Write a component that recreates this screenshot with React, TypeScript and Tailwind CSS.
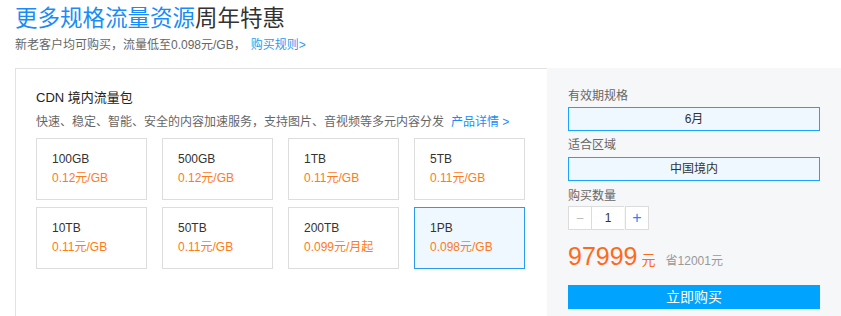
const font = 'font-["Liberation_Sans","Noto_Sans_CJK_SC",sans-serif]'

const packs = [
  { size: '100GB', price: '0.12元/GB' },
  { size: '500GB', price: '0.12元/GB' },
  { size: '1TB', price: '0.11元/GB' },
  { size: '5TB', price: '0.11元/GB' },
  { size: '10TB', price: '0.11元/GB' },
  { size: '50TB', price: '0.11元/GB' },
  { size: '200TB', price: '0.099元/月起' },
  { size: '1PB', price: '0.098元/GB', active: true },
]

export default function App() {
  return (
    <div className={`w-[841px] h-[316px] overflow-hidden bg-white ${font}`}>
      {/* 헤더 */}
      <div className="pl-[15px] pt-[4px]">
        <h1 className="text-[22.5px] leading-[30px] text-[#333]">
          <span className="text-[#1a8cf7]">更多规格流量资源</span>周年特惠
        </h1>
        <p className="text-[12px] leading-[18px] mt-[2px] text-[#666]">
          新老客户均可购买，流量低至0.098元/GB，
          <a className="ml-[5px] text-[#2a9bef]">购买规则&gt;</a>
        </p>
      </div>

      <div className="flex ml-[15px] mt-[14px] h-[260px]">
        {/* 左侧 */}
        <div className="w-[532px] border-l border-t border-[#e2e2e2] pl-[20px] pt-[19px]">
          <div className="text-[13px] leading-[20px] text-[#222]">CDN 境内流量包</div>
          <p className="text-[12px] leading-[18px] mt-[5px] text-[#666]">
            快速、稳定、智能、安全的内容加速服务，支持图片、音视频等多元内容分发
            <a className="ml-[7px] text-[#1a8cf7]">产品详情 &gt;</a>
          </p>
          <div className="grid grid-cols-[repeat(4,111px)] gap-x-[15px] gap-y-[7px] mt-[7px]">
            {packs.map((p) => (
              <div
                key={p.size}
                className={`h-[62px] border pl-[15px] pt-[11px] text-[12px] leading-[19px] ${
                  p.active ? 'border-[#2a9bef] bg-[#eef8fe]' : 'border-[#dddddd] bg-white'
                }`}
              >
                <div className="text-[#333]">{p.size}</div>
                <div className="text-[#ff7a1a]">{p.price}</div>
              </div>
            ))}
          </div>
        </div>

        {/* 右侧 */}
        <div className="flex-1 bg-[#f6f7f9] pl-[21px] pt-[19px]">
          <div className="w-[252px] text-[12px] leading-[18px] text-[#666]">
            <div>有效期规格</div>
            <div className="mt-[2px] h-[24px] border border-[#1aa3ff] bg-[#f0f8ff] flex items-center justify-center text-[#333]">
              6月
            </div>
            <div className="mt-[5px]">适合区域</div>
            <div className="mt-[3px] h-[24px] border border-[#1aa3ff] bg-[#f0f8ff] flex items-center justify-center text-[#333]">
              中国境内
            </div>
            <div className="mt-[6px]">购买数量</div>
            <div className="mt-[1px] flex h-[24px]">
              <button className="w-[24px] border border-[#dcdcdc] bg-white text-[#bbb] flex items-center justify-center">
                –
              </button>
              <div className="w-[32px] border-y border-[#dcdcdc] bg-white text-[#333] flex items-center justify-center">
                1
              </div>
              <button className="w-[24px] ml-[1px] border border-[#dcdcdc] bg-white text-[#1a8cf7] text-[16px] flex items-center justify-center">
                +
              </button>
            </div>
            <div className="mt-[11px] flex items-baseline leading-[30px]">
              <span className="text-[25px] text-[#ff6a1a]">97999</span>
              <span className="ml-[4px] text-[14px] text-[#ff6a1a]">元</span>
              <span className="ml-[10px] text-[12px] text-[#999]">省12001元</span>
            </div>
            <button className="mt-[9px] w-full h-[24px] bg-[#00a4ff] text-white text-[14px] leading-[24px]">
              立即购买
            </button>
          </div>
        </div>
      </div>
    </div>
  )
}
